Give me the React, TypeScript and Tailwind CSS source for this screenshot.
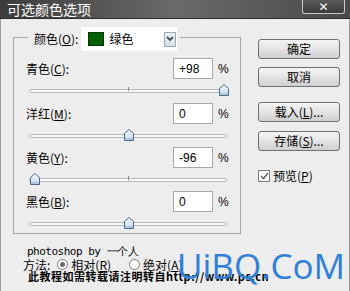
import React from "react";

const cjk = "font-['SimSun','Noto_Sans_CJK_SC',sans-serif]";

type Row = { name: string; key: string; value: number };

const rows: Row[] = [
  { name: "青色", key: "C", value: 98 },
  { name: "洋红", key: "M", value: 0 },
  { name: "黄色", key: "Y", value: -96 },
  { name: "黑色", key: "B", value: 0 },
];

const Slider = ({ value }: { value: number }) => {
  const left = 2 + ((value + 100) / 200) * 195;
  return (
    <div className="relative h-[12px] w-[198px] ml-[15px]">
      <div className="absolute left-0 right-0 top-[5px] h-[4px] rounded-full border border-[#b9b9b9] bg-[#f7f7f7]" />
      <div className="absolute left-[99px] top-[3px] h-[4px] w-px bg-[#8a8a8a]" />
      <svg
        className="absolute top-0"
        style={{ left: left - 5 }}
        width="10"
        height="12"
        viewBox="0 0 10 12"
      >
        <defs>
          <linearGradient id="th" x1="0" y1="0" x2="0" y2="1">
            <stop offset="0" stopColor="#ffffff" />
            <stop offset="1" stopColor="#bcd3ea" />
          </linearGradient>
        </defs>
        <path d="M0.5 11.5 V4.5 L5 0.5 L9.5 4.5 V11.5 Z" fill="url(#th)" stroke="#4c6a8a" />
        <path d="M1 10 H9" stroke="#9fb8d3" />
      </svg>
    </div>
  );
};

const Btn = ({ children, className = "" }: { children: React.ReactNode; className?: string }) => (
  <div
    className={`h-[20px] w-[82px] rounded-[3px] border border-[#707070] bg-gradient-to-b from-[#f4f4f4] via-[#e4e4e4] to-[#cfcfcf] flex items-center justify-center text-[12px] text-black ${className}`}
  >
    {children}
  </div>
);

export default function App() {
  return (
    <div className={`relative w-[350px] h-[291px] overflow-hidden bg-[#ededed] ${cjk}`}>
      {/* title bar */}
      <div className="h-[19px] flex items-start justify-between bg-gradient-to-r from-[#3c3c3c] via-[#6a6a6a] to-[#4a4a4a] border-b border-[#2a2a2a]">
        <div className="pl-[7px] pt-[1px] text-[14px] leading-[17px] text-white">可选颜色选项</div>
        <div className="mr-[5px] h-[14px] w-[43px] rounded-b-[3px] border border-t-0 border-[#c8c8c8] bg-gradient-to-b from-[#5a5a5a] to-[#3c3c3c] flex items-center justify-center">
          <span className="text-white font-bold text-[12px] leading-[12px] font-['DejaVu_Sans',sans-serif]">✕</span>
        </div>
      </div>

      <div className="flex border-l border-r border-[#9c9c9c] h-[272px] flex-col">
        <div className="flex">
          {/* group box */}
          <div className="ml-[12px] mt-[18px] w-[228px] border border-[#a6a6a6] pb-[4px]">
            <div className="-mt-[11px] ml-[14px] flex items-center h-[24px]">
              <div className="bg-[#ededed] pl-[6px] pr-[3px] text-[12px] h-[24px] flex items-center">
                颜色(<span className="underline">O</span>):
              </div>
              <div className="h-[24px] w-[96px] bg-white flex items-center">
                <div className="ml-[7px] h-[14px] w-[16px] bg-[#006000] border border-[#003800]" />
                <span className="ml-[5px] text-[12px]">绿色</span>
                <div className="ml-auto mr-[1px] h-[15px] w-[12px] border border-[#9aa8b8] bg-gradient-to-b from-[#f2f5f8] to-[#d5dde6] flex items-center justify-center">
                  <svg width="8" height="6" viewBox="0 0 8 6">
                    <path d="M1 1 L4 4 L7 1" stroke="#3d4f63" strokeWidth="1.8" fill="none" />
                  </svg>
                </div>
              </div>
              <div className="w-[3px] h-[24px] bg-[#ededed]" />
            </div>
            {rows.map((r, i) => (
              <div key={r.key} className={i === 0 ? "mt-[7px]" : i === 1 ? "mt-[7px]" : "mt-[6px]"}>
                <div className="flex items-center h-[21px]">
                  <div className="ml-[12px] w-[147px] text-[12px]">
                    {r.name}(<span className="underline">{r.key}</span>):
                  </div>
                  <div className="h-[21px] w-[40px] border border-[#a8a8a8] bg-white flex items-center pl-[5px] text-[12px] font-['Liberation_Sans',sans-serif]">
                    {r.value > 0 ? `+${r.value}` : r.value}
                  </div>
                  <div className="ml-[5px] text-[12px] font-['Liberation_Sans',sans-serif]">%</div>
                </div>
                <div className="mt-[5px]">
                  <Slider value={r.value} />
                </div>
              </div>
            ))}
          </div>

          {/* buttons */}
          <div className="ml-[17px] mt-[20px] flex flex-col">
            <Btn>确定</Btn>
            <Btn className="mt-[8px]">取消</Btn>
            <Btn className="mt-[15px]">
              载入(<span className="underline">L</span>)...
            </Btn>
            <Btn className="mt-[9px]">
              存储(<span className="underline">S</span>)...
            </Btn>
            <div className="mt-[16px] flex items-center text-[12px]">
              <div className="h-[12px] w-[12px] border border-[#7a7a7a] bg-white flex items-center justify-center">
                <svg width="9" height="8" viewBox="0 0 9 8">
                  <path d="M1 4 L3.5 6.5 L8 1" stroke="#6a6a6a" strokeWidth="1.6" fill="none" />
                </svg>
              </div>
              <span className="ml-[3px]">
                预览(<span className="underline">P</span>)
              </span>
            </div>
          </div>
        </div>

        {/* bottom */}
        <div className="pl-[22px] pt-[12px] text-[12px] leading-[11px]">
          <div className="pl-[4px] font-['DejaVu_Sans_Mono',monospace] text-[11px] tracking-[-0.5px]">photoshop by 一个人</div>
          <div className="flex items-center h-[12px] mt-[1px]">
            <span>方法:</span>
            <div className="ml-[7px] h-[11px] w-[11px] rounded-full border border-[#7a7a7a] bg-white flex items-center justify-center">
              <div className="h-[5px] w-[5px] rounded-full bg-[#6a6a6a]" />
            </div>
            <span className="ml-[3px]">
              相对(<span className="underline">R</span>)
            </span>
            <div className="ml-[18px] h-[11px] w-[11px] rounded-full border border-[#7a7a7a] bg-white" />
            <span className="ml-[3px]">
              绝对(<span className="underline">A</span>)
            </span>
          </div>
          <div className="pl-[5px] mt-[1px] text-[11px] font-bold tracking-[0.5px] whitespace-nowrap">
            此教程如需转载请注明转自http://www.ps.cn
          </div>
        </div>
      </div>

      {/* watermark */}
      <div className="absolute left-[177px] top-[244px] text-[35px] leading-[44px] text-[#2f80d8] font-['Open_Sans',sans-serif] whitespace-nowrap">
        UiBQ.CoM
      </div>
    </div>
  );
}
